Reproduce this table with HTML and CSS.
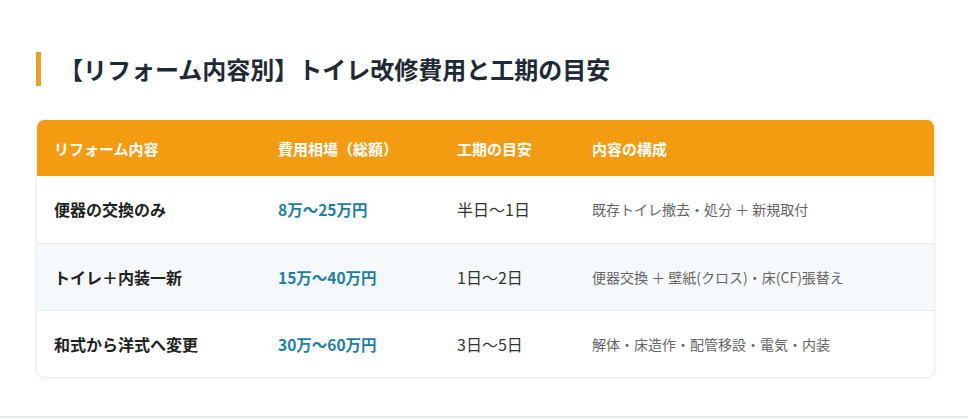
FILE: index.html
```html
<!DOCTYPE html>
<html lang="ja">
<head>
<meta charset="utf-8">
<title>トイレ改修費用と工期の目安</title>
<link rel="stylesheet" href="styles.css">
</head>
<body>
<section class="section">
  <h2 class="heading">【リフォーム内容別】トイレ改修費用と工期の目安</h2>
  <div class="table-wrap">
    <table class="cost-table">
      <thead>
        <tr>
          <th class="c1">リフォーム内容</th>
          <th class="c2">費用相場（総額）</th>
          <th class="c3">工期の目安</th>
          <th class="c4">内容の構成</th>
        </tr>
      </thead>
      <tbody>
        <tr>
          <td class="name">便器の交換のみ</td>
          <td class="price">8万～25万円</td>
          <td class="term">半日～1日</td>
          <td class="detail">既存トイレ撤去・処分 ＋ 新規取付</td>
        </tr>
        <tr class="alt">
          <td class="name">トイレ＋内装一新</td>
          <td class="price">15万～40万円</td>
          <td class="term">1日～2日</td>
          <td class="detail">便器交換 ＋ 壁紙(クロス)・床(CF)張替え</td>
        </tr>
        <tr>
          <td class="name">和式から洋式へ変更</td>
          <td class="price">30万～60万円</td>
          <td class="term">3日～5日</td>
          <td class="detail">解体・床造作・配管移設・電気・内装</td>
        </tr>
      </tbody>
    </table>
  </div>
</section>
</body>
</html>
```

FILE: styles.css
```css
html, body {
  margin: 0;
  padding: 0;
  background: #ffffff;
}
body {
  font-family: "Noto Sans CJK JP", "Noto Sans", sans-serif;
  color: #333;
}
.section {
  padding: 52px 33px 0 36px;
  height: 364px;
  border-bottom: 2px solid #e6e9ee;
}
.heading {
  margin: 0;
  border-left: 5px solid #f0a020;
  padding-left: 18px;
  height: 34px;
  line-height: 34px;
  font-size: 24px;
  font-weight: 700;
  color: #1f2a36;
}
.table-wrap {
  margin-top: 34px;
  border-radius: 8px;
  overflow: hidden;
  border: 1px solid #e9ecef;
  border-top: none;
  box-shadow: 0 1px 4px rgba(0, 0, 0, 0.05);
}
.cost-table {
  width: 100%;
  border-collapse: collapse;
  table-layout: fixed;
}
.cost-table th,
.cost-table td {
  box-sizing: border-box;
  padding: 0 18px;
  text-align: left;
}
.cost-table th {
  background: #f39c12;
  color: #ffffff;
  font-size: 15px;
  font-weight: 700;
  height: 56px;
}
.cost-table th.c1 { width: 223px; padding-left: 17px; }
.cost-table th.c2 { width: 179px; }
.cost-table th.c3 { width: 135px; }
.cost-table td {
  height: 67px;
  border-bottom: 1px solid #e8ebee;
  vertical-align: middle;
}
.cost-table td.name { padding-left: 17px; }
.cost-table tbody tr:last-child td {
  border-bottom: none;
}
.cost-table tr.alt td {
  background: #f6f9fb;
}
.name {
  font-size: 16px;
  font-weight: 700;
  color: #222;
}
.price {
  font-size: 15.5px;
  font-weight: 700;
  color: #1b7fa6;
}
.term {
  font-size: 16px;
  color: #333;
}
.detail {
  font-size: 14px;
  color: #666;
}
```
